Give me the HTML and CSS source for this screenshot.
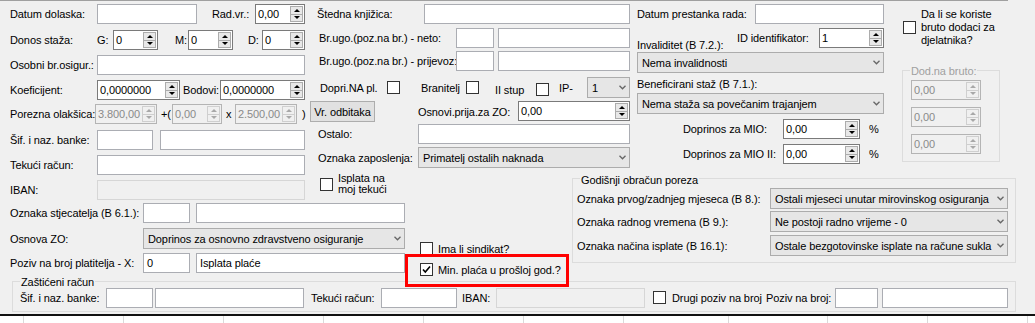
FILE: index.html
```html
<!DOCTYPE html>
<html lang="hr">
<head>
  <meta charset="UTF-8" />
  <title>Djelatnik</title>
  <link rel="stylesheet" href="styles.css">
</head>
<body>

<div class="topline"></div>

<div class="cols">
  <!-- lijevi dio -->
  <div class="left">
    <div class="left-top">
      <div class="col-l">
        <div class="row mt3"><span class="lbl w87">Datum dolaska:</span><div class="tb w100"></div><span class="lbl ml15 w43">Rad.vr.:</span><div class="num w50"><span class="val">0,00</span><span class="spin"><i class="up"></i><i class="dn"></i></span></div></div>
        <div class="row mt6"><span class="lbl w87">Donos staža:</span><span class="lbl w16">G:</span><div class="num w45"><span class="val">0</span><span class="spin"><i class="up"></i><i class="dn"></i></span></div><span class="lbl ml17 w13">M:</span><div class="num w45"><span class="val">0</span><span class="spin"><i class="up"></i><i class="dn"></i></span></div><span class="lbl ml15 w14">D:</span><div class="num w43"><span class="val">0</span><span class="spin"><i class="up"></i><i class="dn"></i></span></div></div>
        <div class="row mt5"><span class="lbl w87">Osobni br.osigur.:</span><div class="tb w208"></div></div>
        <div class="row mt5"><span class="lbl w87">Koeficijent:</span><div class="num w83"><span class="val">0,0000000</span><span class="spin"><i class="up"></i><i class="dn"></i></span></div><span class="lbl ml3 w37">Bodovi:</span><div class="num w85"><span class="val">0,0000000</span><span class="spin"><i class="up"></i><i class="dn"></i></span></div></div>
        <div class="row mt4"><span class="lbl w85">Porezna olakšica:</span><div class="num dis w62"><span class="val">3.800,00</span><span class="spin"><i class="up"></i><i class="dn"></i></span></div><span class="lbl ml4 w11">+(</span><div class="num dis w50"><span class="val">0,00</span><span class="spin"><i class="up"></i><i class="dn"></i></span></div><span class="lbl ml4 w9">x</span><div class="num dis w62"><span class="val">2.500,00</span><span class="spin"><i class="up"></i><i class="dn"></i></span></div><span class="lbl ml5">)</span></div>
        <div class="row mt6"><span class="lbl w87">Šif. i naz. banke:</span><div class="tb w56"></div><div class="tb ml7 w145"></div></div>
        <div class="row mt5"><span class="lbl w87">Tekući račun:</span><div class="tb w208"></div></div>
        <div class="row mt5"><span class="lbl w87">IBAN:</span><div class="tb dis w208"></div></div>
      </div>

      <div class="col-m">
        <div class="row mt3 pl7"><span class="lbl w107">Štedna knjižica:</span><div class="tb w206"></div></div>
        <div class="row mt4 pl9"><span class="lbl w137">Br.ugo.(poz.na br.) - neto:</span><div class="tb w38"></div><div class="tb ml4 w132"></div></div>
        <div class="row mt3 pl9"><span class="lbl w137">Br.ugo.(poz.na br.) - prijevoz:</span><div class="tb w38"></div><div class="tb ml4 w132"></div></div>
        <div class="row h21 mt6 pl10"><span class="lbl w67">Dopri.NA pl.</span><span class="chk"></span><span class="lbl ml21 w45">Branitelj</span><span class="chk"></span><span class="lbl ml16 w41 low">II stup</span><span class="chk low"></span><span class="lbl ml10 w28">IP-</span><div class="cb w43"><span>1</span><svg width="7" height="5" viewBox="0 0 7 5"><polyline points="0.5,0.8 3.5,3.8 6.5,0.8" fill="none" stroke="#666" stroke-width="1.3"/></svg></div></div>
        <div class="row h21 mt3"><div class="btn">Vr. odbitaka</div><span class="lbl ml43 w100">Osnovi.prija.za ZO:</span><div class="num w112 top"><span class="val">0,00</span><span class="spin"><i class="up"></i><i class="dn"></i></span></div></div>
        <div class="row mt2 pl8"><span class="lbl w100">Ostalo:</span><div class="tb w212"></div></div>
        <div class="row h21 mt3 pl8"><span class="lbl w100">Oznaka zaposlenja:</span><div class="cb w212"><span>Primatelj ostalih naknada</span><svg width="7" height="5" viewBox="0 0 7 5"><polyline points="0.5,0.8 3.5,3.8 6.5,0.8" fill="none" stroke="#666" stroke-width="1.3"/></svg></div></div>
        <div class="row h22 mt5 pl10"><span class="chk"></span><span class="lbl ml5 two">Isplata na<br>moj tekući</span></div>
      </div>
    </div>

    <div class="left-bottom">
      <div class="col-l2">
        <div class="row mt3"><span class="lbl w133">Oznaka stjecatelja (B 6.1.):</span><div class="tb w47"></div><div class="tb ml6 w209"></div></div>
        <div class="row h21 mt5"><span class="lbl w133">Osnova ZO:</span><div class="cb w262"><span>Doprinos za osnovno zdravstveno osiguranje</span><svg width="7" height="5" viewBox="0 0 7 5"><polyline points="0.5,0.8 3.5,3.8 6.5,0.8" fill="none" stroke="#666" stroke-width="1.3"/></svg></div></div>
        <div class="row mt4"><span class="lbl w133">Poziv na broj platitelja - X:</span><div class="tb w47">0</div><div class="tb ml6 w209">Isplata plaće</div></div>
      </div>

      <div class="checks">
        <div class="row h13 mt42"><span class="chk"></span><span class="lbl ml5">Ima li sindikat?</span></div>
        <div class="row h13 mt8"><span class="chk"><svg width="11" height="11" viewBox="0 0 11 11"><polyline points="2,5.5 4.3,8 9,2.5" fill="none" stroke="#000" stroke-width="1.6"/></svg></span><span class="lbl ml5">Min. plaća u prošloj god.?</span></div>
        <div class="mark"></div>
      </div>
    </div>
  </div>

  <!-- desni dio -->
  <div class="right">
    <div class="right-top">
      <div class="col-r">
        <div class="row mt3"><span class="lbl w118">Datum prestanka rada:</span><div class="tb w129"></div></div>
        <div class="row h24 mt4"><span class="lbl w100 end">Invaliditet (B 7.2.):</span><span class="lbl w82 start">ID identifikator:</span><div class="num w65 top"><span class="val">1</span><span class="spin"><i class="up"></i><i class="dn"></i></span></div></div>
        <div class="row h21"><div class="cb w247"><span>Nema invalidnosti</span><svg width="7" height="5" viewBox="0 0 7 5"><polyline points="0.5,0.8 3.5,3.8 6.5,0.8" fill="none" stroke="#666" stroke-width="1.3"/></svg></div></div>
        <div class="row h13 mt4"><span class="lbl">Beneficirani staž (B 7.1.):</span></div>
        <div class="row h21 mt3"><div class="cb w247"><span>Nema staža sa povečanim trajanjem</span><svg width="7" height="5" viewBox="0 0 7 5"><polyline points="0.5,0.8 3.5,3.8 6.5,0.8" fill="none" stroke="#666" stroke-width="1.3"/></svg></div></div>
        <div class="row mt5 pl46"><span class="lbl w100">Doprinos za MIO:</span><div class="num w77"><span class="val">0,00</span><span class="spin"><i class="up"></i><i class="dn"></i></span></div><span class="lbl ml9">%</span></div>
        <div class="row mt5 pl46"><span class="lbl w100">Doprinos za MIO II:</span><div class="num w77"><span class="val">0,00</span><span class="spin"><i class="up"></i><i class="dn"></i></span></div><span class="lbl ml9">%</span></div>
      </div>

      <div class="col-rr">
        <div class="row h39 mt7"><span class="chk"></span><span class="lbl ml5 three">Da li se koriste<br>bruto dodaci za<br>djelatnika?</span></div>
        <div class="grp grp-dod">
          <span class="grp-title off">Dod.na bruto:</span>
          <div class="num dis w70 mt2"><span class="val">0,00</span><span class="spin"><i class="up"></i><i class="dn"></i></span></div>
          <div class="num dis w70 mt7"><span class="val">0,00</span><span class="spin"><i class="up"></i><i class="dn"></i></span></div>
          <div class="num dis w70 mt7"><span class="val">0,00</span><span class="spin"><i class="up"></i><i class="dn"></i></span></div>
        </div>
      </div>
    </div>

    <div class="grp grp-god">
      <span class="grp-title">Godišnji obračun poreza</span>
      <div class="row h21 mt1"><span class="lbl w193">Oznaka prvog/zadnjeg mjeseca (B 8.):</span><div class="cb w238"><span>Ostali mjeseci unutar mirovinskog osiguranja</span><svg width="7" height="5" viewBox="0 0 7 5"><polyline points="0.5,0.8 3.5,3.8 6.5,0.8" fill="none" stroke="#666" stroke-width="1.3"/></svg></div></div>
      <div class="row h21 mt2"><span class="lbl w193">Oznaka radnog vremena (B 9.):</span><div class="cb w238"><span>Ne postoji radno vrijeme - 0</span><svg width="7" height="5" viewBox="0 0 7 5"><polyline points="0.5,0.8 3.5,3.8 6.5,0.8" fill="none" stroke="#666" stroke-width="1.3"/></svg></div></div>
      <div class="row h21 mt3"><span class="lbl w193">Oznaka načina isplate (B 16.1):</span><div class="cb w238"><span>Ostale bezgotovinske isplate na račune sukla</span><svg width="7" height="5" viewBox="0 0 7 5"><polyline points="0.5,0.8 3.5,3.8 6.5,0.8" fill="none" stroke="#666" stroke-width="1.3"/></svg></div></div>
    </div>
  </div>
</div>

<!-- zaštićeni račun -->
<div class="grp grp-zast">
  <span class="grp-title">Zaštićeni račun</span>
  <div class="row h19 pl7">
    <span class="lbl w86">Šif. i naz. banke:</span><div class="tb h19 w47"></div><div class="tb h19 ml2 w149"></div>
    <span class="lbl ml7 w70">Tekući račun:</span><div class="tb h19 w76"></div>
    <span class="lbl ml5 w34">IBAN:</span><div class="tb h19 dis w149"></div>
    <span class="chk ml8"></span><span class="lbl ml6 w94">Drugi poziv na broj</span>
    <span class="lbl w69">Poziv na broj:</span><div class="tb h19 w43"></div><div class="tb h19 ml4 w126"></div>
  </div>
</div>

<!-- zaglavlje tablice -->
<div class="gridline"></div>
<div class="grid">
  <span class="c24"></span><span></span><span></span><span></span><span></span><span></span><span></span><span class="c105"></span><span class="c99"></span><span></span><span></span>
</div>

</body>
</html>
```

FILE: styles.css
```css
body {
  margin: 0;
  width: 1035px;
  height: 323px;
  overflow: hidden;
  background: #f0f0f0;
  font: 11px "Liberation Sans", Arial, sans-serif;
  letter-spacing: -0.1px;
  color: #000;
}
.topline {
  width: 1008px;
  height: 1px;
  background: #a0a0a0;
}
.cols {
  display: flex;
  align-items: flex-start;
}
.left {
  width: 630px;
  padding-left: 10px;
  box-sizing: border-box;
  flex: none;
}
.left-top, .left-bottom {
  display: flex;
  align-items: flex-start;
}
.col-l { width: 295px; flex: none; }
.col-m { width: 320px; margin-left: 5px; flex: none; }
.col-l2 { width: 395px; flex: none; }
.checks {
  position: relative;
  padding-left: 15px;
  flex: 1;
}
.right { width: 385px; flex: none; }
.right-top {
  display: flex;
  align-items: flex-start;
  padding-left: 7px;
}
.col-r { width: 247px; flex: none; }
.col-rr { width: 112px; margin-left: 19px; flex: none; }

/* redovi */
.row {
  display: flex;
  align-items: center;
  height: 20px;
}
.h13 { height: 13px; }
.h19 { height: 19px; }
.h21 { height: 21px; }
.h22 { height: 22px; }
.h24 { height: 24px; }
.h39 { height: 39px; }

.mt1 { margin-top: 1px; }
.mt2 { margin-top: 2px; }
.mt3 { margin-top: 3px; }
.mt4 { margin-top: 4px; }
.mt5 { margin-top: 5px; }
.mt6 { margin-top: 6px; }
.mt7 { margin-top: 7px; }
.mt8 { margin-top: 8px; }
.mt42 { margin-top: 42px; }

.ml2 { margin-left: 2px; }
.ml3 { margin-left: 3px; }
.ml4 { margin-left: 4px; }
.ml5 { margin-left: 5px; }
.ml6 { margin-left: 6px; }
.ml7 { margin-left: 7px; }
.ml8 { margin-left: 8px; }
.ml9 { margin-left: 9px; }
.ml10 { margin-left: 10px; }
.ml15 { margin-left: 15px; }
.ml16 { margin-left: 16px; }
.ml17 { margin-left: 17px; }
.ml21 { margin-left: 21px; }
.ml43 { margin-left: 43px; }

.pl7 { padding-left: 7px; }
.pl8 { padding-left: 8px; }
.pl9 { padding-left: 9px; }
.pl10 { padding-left: 10px; }
.pl46 { padding-left: 46px; }

.w9 { width: 9px; } .w11 { width: 11px; } .w13 { width: 13px; } .w14 { width: 14px; }
.w16 { width: 16px; } .w28 { width: 28px; } .w34 { width: 34px; } .w37 { width: 37px; }
.w38 { width: 38px; } .w41 { width: 41px; } .w43 { width: 43px; } .w45 { width: 45px; }
.w47 { width: 47px; } .w50 { width: 50px; } .w56 { width: 56px; } .w62 { width: 62px; }
.w65 { width: 65px; } .w67 { width: 67px; } .w69 { width: 69px; } .w70 { width: 70px; }
.w76 { width: 76px; } .w77 { width: 77px; } .w82 { width: 82px; } .w83 { width: 83px; }
.w85 { width: 85px; } .w86 { width: 86px; } .w87 { width: 87px; } .w94 { width: 94px; }
.w100 { width: 100px; } .w107 { width: 107px; } .w112 { width: 112px; } .w118 { width: 118px; }
.w126 { width: 126px; } .w129 { width: 129px; } .w132 { width: 132px; } .w133 { width: 133px; }
.w137 { width: 137px; } .w145 { width: 145px; } .w149 { width: 149px; } .w193 { width: 193px; }
.w206 { width: 206px; } .w208 { width: 208px; } .w209 { width: 209px; } .w212 { width: 212px; }
.w238 { width: 238px; } .w247 { width: 247px; } .w262 { width: 262px; }

/* kontrole */
.lbl {
  white-space: nowrap;
  flex: none;
}
.lbl.two { line-height: 11px; }
.lbl.three { line-height: 13px; }
.lbl.end { align-self: flex-end; line-height: 13px; }
.lbl.start { align-self: flex-start; line-height: 20px; }
.low { position: relative; top: 2px; }
.top { align-self: flex-start; }

.tb {
  height: 20px;
  box-sizing: border-box;
  border: 1px solid #abadb3;
  background: #fff;
  padding: 0 3px;
  line-height: 18px;
  white-space: nowrap;
  overflow: hidden;
  flex: none;
}
.tb.h19 { line-height: 17px; }
.tb.dis {
  background: #f0f0f0;
  border-color: #d6d6d6;
}

.num {
  display: flex;
  height: 20px;
  box-sizing: border-box;
  border: 1px solid #7a7a7a;
  background: #fff;
  flex: none;
}
.num .val {
  flex: 1;
  padding-left: 2px;
  line-height: 18px;
  white-space: nowrap;
  overflow: hidden;
}
.spin {
  width: 13px;
  margin: 1px;
  box-sizing: border-box;
  border: 1px solid #acacac;
  background: #e8e8e8;
  display: flex;
  flex-direction: column;
  flex: none;
}
.spin i {
  flex: 1;
  display: flex;
  align-items: center;
  justify-content: center;
}
.spin i + i { border-top: 1px solid #acacac; }
.spin i::before {
  content: "";
  border-left: 3px solid transparent;
  border-right: 3px solid transparent;
}
.spin .up::before { border-bottom: 3px solid #000; }
.spin .dn::before { border-top: 3px solid #000; }
.num.dis {
  background: #f0f0f0;
  border-color: #b4b4b4;
  color: #8a8a8a;
}
.num.dis .spin { background: #f0f0f0; border-color: #cfcfcf; }
.num.dis .spin i + i { border-top-color: #cfcfcf; }
.num.dis .spin .up::before { border-bottom-color: #a8a8a8; }
.num.dis .spin .dn::before { border-top-color: #a8a8a8; }

.cb {
  display: flex;
  align-items: center;
  height: 21px;
  box-sizing: border-box;
  border: 1px solid #acacac;
  background: #e6e6e6;
  padding-left: 4px;
  flex: none;
}
.cb span {
  flex: 1;
  overflow: hidden;
  white-space: nowrap;
}
.cb svg {
  flex: none;
  margin: 0 3px 0 4px;
}

.chk {
  width: 13px;
  height: 13px;
  box-sizing: border-box;
  border: 1px solid #333;
  background: #fff;
  flex: none;
}
.chk svg { display: block; }

.btn {
  width: 65px;
  height: 21px;
  box-sizing: border-box;
  border: 1px solid #adadad;
  background: #e1e1e1;
  display: flex;
  align-items: center;
  justify-content: center;
  flex: none;
}

/* grupe */
.grp {
  border: 1px solid #dcdcdc;
  box-sizing: border-box;
}
.grp-title {
  display: block;
  width: fit-content;
  height: 13px;
  line-height: 13px;
  padding: 0 1px;
  margin-left: 7px;
  background: #f0f0f0;
}
.grp-title.off { color: #a0a0a0; }
.grp-dod {
  width: 98px;
  margin-left: -1px;
  margin-top: 23px;
  padding: 0 0 7px 8px;
}
.grp-dod .grp-title { margin-top: -6px; margin-left: -1px; }
.grp-god {
  width: 444px;
  margin-left: -58px;
  margin-top: 14px;
  padding: 0 0 6px 4px;
}
.grp-god .grp-title { margin-top: -5px; margin-left: 3px; }
.grp-zast {
  width: 1004px;
  margin: 5px 0 0 12px;
  padding-bottom: 4px;
}
.grp-zast .grp-title { margin-top: -6px; }
.grp-zast .row { margin-top: -1px; }

/* kvadrat oznake */
.mark {
  position: absolute;
  left: 0;
  top: 54px;
  width: 164px;
  height: 33px;
  box-sizing: border-box;
  border: 3px solid #f00;
}

/* tablica */
.gridline {
  height: 2px;
  margin-top: 2px;
  background: #111;
}
.grid {
  display: flex;
  height: 12px;
  background: #fff;
}
.grid span {
  width: 100px;
  box-sizing: border-box;
  border-right: 1px solid #dadada;
  flex: none;
}
.grid .c24 { width: 24px; }
.grid .c105 { width: 105px; }
.grid .c99 { width: 99px; }
```
